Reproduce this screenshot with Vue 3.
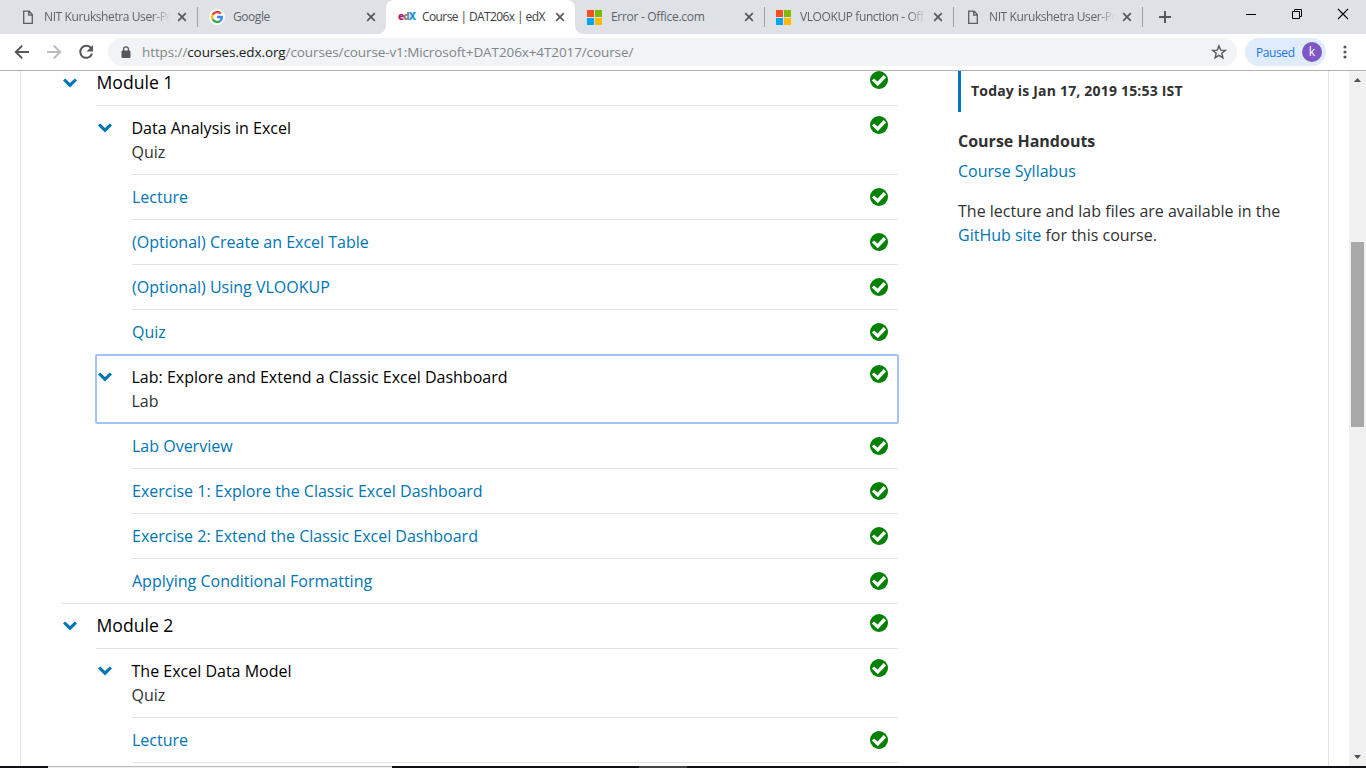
<script setup>
const tabs = [
  { icon: 'file', title: 'NIT Kurukshetra User-Po' },
  { icon: 'google', title: 'Google' },
  { icon: 'edx', title: 'Course | DAT206x | edX', active: true },
  { icon: 'ms', title: 'Error - Office.com' },
  { icon: 'ms', title: 'VLOOKUP function - Off' },
  { icon: 'file', title: 'NIT Kurukshetra User-Po' },
]
const modules = [
  {
    title: 'Module 1',
    sections: [
      {
        title: 'Data Analysis in Excel',
        kind: 'Quiz',
        units: ['Lecture', '(Optional) Create an Excel Table', '(Optional) Using VLOOKUP', 'Quiz'],
      },
      {
        title: 'Lab: Explore and Extend a Classic Excel Dashboard',
        kind: 'Lab',
        focused: true,
        units: [
          'Lab Overview',
          'Exercise 1: Explore the Classic Excel Dashboard',
          'Exercise 2: Extend the Classic Excel Dashboard',
          'Applying Conditional Formatting',
        ],
      },
    ],
  },
  {
    title: 'Module 2',
    sections: [{ title: 'The Excel Data Model', kind: 'Quiz', units: ['Lecture', ''] }],
  },
]
</script>

<template>
  <div class="window">
    <svg class="defs" width="0" height="0">
      <symbol id="check" viewBox="0 0 18 18">
        <circle cx="9" cy="9" r="9" fill="#008100" />
        <path d="M1.9 9.6 4 7.5 7.6 10.6 13.6 4.1 16.1 6.5 7.8 15.2z" fill="#fff" />
      </symbol>
      <symbol id="chevron" viewBox="0 0 14 10">
        <path d="M0 2.6 2.2.5 7 5.1 11.8.5 14 2.6 7 9.5z" fill="#0075b4" />
      </symbol>
    </svg>

    <header class="strip">
      <div v-for="(t, i) in tabs" :key="i" class="tab" :class="{ active: t.active, plain: i === 1 || i === 2 }">
        <svg v-if="t.icon === 'file'" class="fav" viewBox="0 0 16 16">
          <path d="M3.7 2.2h5.4l3.2 3.4v8.7H3.7zM8.7 2.2v3.9h3.6" fill="none" stroke="#5b5e62" stroke-width="1.3" />
        </svg>
        <svg v-else-if="t.icon === 'google'" class="fav" viewBox="0 0 16 16">
          <circle cx="8" cy="8" r="8" fill="#fff" />
          <g fill="none" stroke-width="2.3">
            <path d="M11.7 4.6A5 5 0 0 0 3.6 5.7" stroke="#ea4335" />
            <path d="M3.6 5.7a5 5 0 0 0 0 4.6" stroke="#fbbc05" />
            <path d="M3.6 10.3a5 5 0 0 0 7.7 1.5" stroke="#34a853" />
            <path d="M11.3 11.8A5 5 0 0 0 12.9 8H8" stroke="#4285f4" />
          </g>
        </svg>
        <span v-else-if="t.icon === 'edx'" class="fav edx"><b class="e">e</b><b class="d">d</b><b class="x">X</b></span>
        <svg v-else class="fav" viewBox="0 0 16 16">
          <path d="M0 1h7v7H0z" fill="#f25022" /><path d="M8 1h7v7H8z" fill="#7fba00" />
          <path d="M0 9h7v7H0z" fill="#00a4ef" /><path d="M8 9h7v7H8z" fill="#ffb900" />
        </svg>
        <span class="title" :class="'t' + i">{{ t.title }}</span>
        <svg class="close" viewBox="0 0 10 10"><path d="M1.2 1.2l7.6 7.6M8.8 1.2 1.2 8.8" stroke="#55585c" stroke-width="1.7" /></svg>
      </div>
      <svg class="plus" viewBox="0 0 12 12"><path d="M6 0v12M0 6h12" stroke="#55585c" stroke-width="2" /></svg>
      <div class="controls">
        <svg viewBox="0 0 12 12"><path d="M1 6.5h10" stroke="#000" /></svg>
        <svg viewBox="0 0 12 12"><path d="M1.5 3.5h7v7h-7zM3.5 3.5v-2h7v7h-2" fill="none" stroke="#000" /></svg>
        <svg viewBox="0 0 12 12"><path d="M1 1l10 10M11 1 1 11" stroke="#000" stroke-width="1.1" /></svg>
      </div>
    </header>

    <div class="toolbar">
      <svg class="nav" viewBox="0 0 16 16"><path d="M15 8H2M8.2 1.6 1.8 8l6.4 6.4" fill="none" stroke="#55585c" stroke-width="2" /></svg>
      <svg class="nav" viewBox="0 0 16 16"><path d="M1 8h13M7.8 1.6 14.2 8l-6.4 6.4" fill="none" stroke="#babcbe" stroke-width="2" /></svg>
      <svg class="nav" viewBox="0 0 16 16">
        <path d="M13.2 4.4A6 6 0 1 0 14 9.6" fill="none" stroke="#55585c" stroke-width="2" />
        <path d="M15 1v6.4H8.6z" fill="#55585c" />
      </svg>
      <div class="omnibox">
        <svg class="lock" viewBox="0 0 10 12">
          <path d="M1 5h8v6.5H1z" fill="#55585c" stroke="#55585c" stroke-linejoin="round" />
          <path d="M2.6 5V3.2a2.4 2.4 0 0 1 4.8 0V5" fill="none" stroke="#55585c" stroke-width="1.3" />
        </svg>
        <span class="url">https://<b>courses.edx.org</b>/courses/course-v1:Microsoft+DAT206x+4T2017/course/</span>
        <svg class="star" viewBox="0 0 16 16">
          <path d="M8 1.9l1.7 4.2 4.6.3-3.5 2.9 1.1 4.4L8 11.3l-3.9 2.4 1.1-4.4L1.7 6.4l4.6-.3z" fill="none" stroke="#55585c" stroke-width="1.4" />
        </svg>
      </div>
      <div class="profile"><span>Paused</span><i>k</i></div>
      <svg class="dots" viewBox="0 0 4 14"><g fill="#55585c"><circle cx="2" cy="2" r="1.6" /><circle cx="2" cy="7" r="1.6" /><circle cx="2" cy="12" r="1.6" /></g></svg>
    </div>

    <div class="viewport">
      <div class="page">
        <main class="outline">
          <section v-for="m in modules" :key="m.title" class="module">
            <h3 class="module-row">
              <svg class="chev"><use href="#chevron" /></svg>
              <span class="grow">{{ m.title }}</span>
              <svg class="check"><use href="#check" /></svg>
            </h3>
            <div v-for="s in m.sections" :key="s.title" class="section">
              <div class="section-row" :class="{ focused: s.focused }">
                <svg class="chev"><use href="#chevron" /></svg>
                <div class="grow">
                  <div class="name">{{ s.title }}</div>
                  <div>{{ s.kind }}</div>
                </div>
                <svg class="check"><use href="#check" /></svg>
              </div>
              <div v-for="u in s.units" :key="u" class="unit">
                <a class="grow">{{ u }}</a>
                <svg v-if="u" class="check"><use href="#check" /></svg>
              </div>
            </div>
          </section>
        </main>
        <aside class="side">
          <div class="today">Today is Jan 17, 2019 15:53 IST</div>
          <h4>Course Handouts</h4>
          <p class="syllabus"><a>Course Syllabus</a></p>
          <p>The lecture and lab files are available in the<br /><a>GitHub site</a> for this course.</p>
        </aside>
      </div>
      <div class="scrollbar">
        <svg viewBox="0 0 7 4"><path d="M0 4 3.5 0 7 4z" fill="#505050" /></svg>
        <div class="thumb"></div>
        <svg viewBox="0 0 7 4"><path d="M0 0 3.5 4 7 0z" fill="#505050" /></svg>
      </div>
    </div>
    <footer class="taskbar"><i class="a"></i><i class="b"></i><i class="c"></i><i class="d"></i></footer>
  </div>
</template>

<style>
html, body { margin: 0; overflow: hidden; background: #fff; }
</style>

<style scoped>
.window { width: 1366px; height: 768px; display: flex; flex-direction: column; overflow: hidden; background: #fff; font-family: "Open Sans", sans-serif; }
.window * { box-sizing: border-box; }
.defs { position: absolute; }
svg { display: block; flex: none; }
.strip { height: 34px; flex: none; background: #dee1e6; display: flex; padding-left: 8px; font-size: 12px; color: #5f6368; }
.tab { width: 189px; height: 34px; display: flex; align-items: center; padding: 0 10px 0 12px; position: relative; }
.tab:not(.plain)::after { content: ""; position: absolute; right: -1px; top: 7px; width: 1px; height: 20px; background: #9da0a5; }
.tab.active { background: #fff; border-radius: 8px 8px 0 0; color: #3c4043; }
.tab.active::before { content: ""; position: absolute; left: -8px; right: -8px; bottom: 0; height: 8px; background: radial-gradient(circle at 0 0, transparent 7.5px, #fff 8px) left / 8px 8px no-repeat, radial-gradient(circle at 100% 0, transparent 7.5px, #fff 8px) right / 8px 8px no-repeat; }
.fav { width: 16px; height: 16px; flex: none; }
.title { flex: none; width: 126px; margin-left: 8px; white-space: nowrap; overflow: hidden; line-height: 18px; letter-spacing: -0.3px; }
.t1 { letter-spacing: -0.45px; }
.t2 { letter-spacing: -0.6px; }
.t0, .t4, .t5 { letter-spacing: -0.4px; -webkit-mask-image: linear-gradient(90deg, #000 108px, transparent 126px); mask-image: linear-gradient(90deg, #000 108px, transparent 126px); }
.close { width: 10px; height: 10px; margin-left: 7px; }
.edx { font: bold 10px/15px "Open Sans", sans-serif; letter-spacing: -1px; display: flex; }
.edx .e { color: #a81e60; }
.edx .d { color: #85848a; }
.edx .x { color: #1b96e8; }
.plus { width: 12px; height: 12px; margin: 11px 0 0 17px; }
.controls { margin-left: auto; display: flex; gap: 34px; padding: 8px 17px 0 0; }
.controls svg { width: 12px; height: 12px; }
.toolbar { height: 37px; flex: none; display: flex; align-items: center; border-bottom: 1px solid #b3b3b3; padding-left: 14px; }
.nav { width: 16px; height: 16px; margin-right: 16px; }
.omnibox { margin-left: -2px; width: 1129px; height: 28px; border-radius: 14px; background: #f1f3f4; display: flex; align-items: center; padding: 0 10px 0 13px; }
.lock { width: 10px; height: 12px; }
.url { flex: 1; margin-left: 11px; font-size: 13.5px; line-height: 20px; letter-spacing: -0.1px; color: #80868b; white-space: nowrap; }
.url b { font-weight: 400; color: #202124; }
.star { width: 16px; height: 16px; }
.profile { margin-left: 8px; width: 81px; height: 28px; border-radius: 14px; background: #e0ebfb; color: #1a73e8; display: flex; align-items: center; justify-content: space-between; padding: 0 4px 0 11px; font-size: 12px; letter-spacing: -0.6px; }
.profile span { letter-spacing: -0.55px; }
.profile span { letter-spacing: -0.6px; }
.profile i { width: 20px; height: 20px; border-radius: 50%; background: #7e57c2; color: #fff; font-style: normal; text-align: center; line-height: 19px; letter-spacing: 0; }
.profile span { letter-spacing: -0.4px; }
.dots { width: 4px; height: 14px; margin-left: 17px; }
.viewport { flex: 1; min-height: 0; display: flex; overflow: hidden; }
.page { margin-left: 20px; width: 1309px; border: solid #e4e4e4; border-width: 0 1px; display: flex; overflow: hidden; font-size: 16px; line-height: 24px; color: #313131; }
.outline { width: 837px; margin: -11px 0 0 40px; flex: none; }
.module { border-top: 1px solid #e4e4e4; }
.module-row, .section-row { display: flex; margin: 0; padding-top: 10px; padding-right: 10px; }
.module-row { height: 44px; font-size: 17.6px; line-height: 23px; font-weight: 400; color: #000; padding-left: 1.5px; }
.section { margin-left: 35px; border-top: 1px solid #e4e4e4; }
.section-row { height: 68px; padding-left: 1.5px; }
.section-row.focused { outline: 2px solid #a3c3fb; outline-offset: -1px; border-radius: 1px; position: relative; }
.name { color: #000; }
.grow { flex: 1; }
.chev { width: 14px; height: 10px; margin: 7px 20px 0 0; }
.check { width: 18px; height: 18px; }
.unit { margin-left: 36px; height: 45px; border-top: 1px solid #e4e4e4; display: flex; align-items: center; padding-right: 10px; }
a { color: #0075b4; }
.side { margin-left: 60px; white-space: nowrap; }
.today { height: 41px; border-left: 3px solid #0075b4; padding-left: 10px; font-size: 14px; font-weight: 700; line-height: 40px; letter-spacing: 0.19px; }
h4 { margin: 17px 0 0; font-size: 16px; font-weight: 700; line-height: 24px; }
p { margin: 0; }
.syllabus { margin: 6px 0 16px; }
.scrollbar { margin-left: auto; width: 17px; background: #f1f1f1; display: flex; flex-direction: column; align-items: center; justify-content: space-between; padding: 7px 0; }
.scrollbar svg { width: 7px; height: 4px; }
.thumb { width: 13px; height: 185px; background: #a8a8a8; margin-bottom: 169px; }
.taskbar { height: 2px; flex: none; background: #101114; display: flex; }
.taskbar .a { width: 48px; }
.taskbar .b { width: 344px; background: linear-gradient(#b8bab8 50%, #efefef 50%); }
.taskbar .c { width: 247px; }
.taskbar .d { width: 48px; background: #444; }
</style>
